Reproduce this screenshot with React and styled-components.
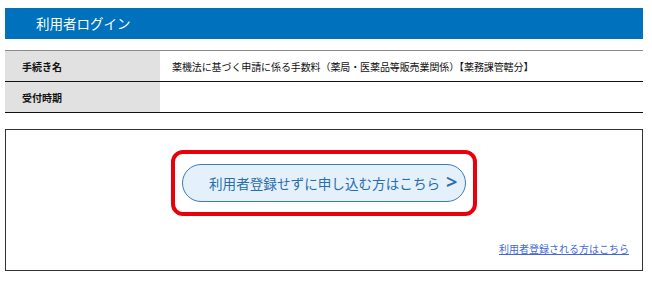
import React from "react";
import styled, { createGlobalStyle } from "styled-components";

const GlobalStyle = createGlobalStyle`
  body {
    margin: 0;
    background: #fff;
    font-family: "Noto Sans CJK JP", "Noto Sans", sans-serif;
  }
`;

const Page = styled.div`
  width: 638px;
  padding: 8px 9px 0 5px;
`;

const TitleBar = styled.h1`
  margin: 0;
  height: 31px;
  line-height: 31px;
  padding-left: 31px;
  background: #0071bc;
  color: #fff;
  font-size: 13.5px;
  font-weight: 400;
`;

const InfoTable = styled.div`
  margin-top: 11px;
  border-top: 1px solid #8a8a8a;
`;

const InfoRow = styled.div`
  display: grid;
  grid-template-columns: 155px 1fr;
  height: 31px;
  border-bottom: 1px solid #111;
  box-sizing: border-box;
`;

const Label = styled.div`
  background: #e1e1e1;
  padding-left: 17px;
  display: flex;
  align-items: center;
  font-size: 10px;
  font-weight: 700;
  color: #111;
`;

const Value = styled.div`
  padding-left: 12px;
  display: flex;
  align-items: center;
  font-size: 10px;
  color: #111;
  letter-spacing: -0.1px;
`;

const EntryBox = styled.div`
  margin-top: 16px;
  height: 142px;
  box-sizing: border-box;
  border: 1px solid #333;
  padding: 20px 13px 0;
`;

const Center = styled.div`
  display: flex;
  justify-content: center;
`;

const Highlight = styled.div`
  border: 4px solid #e8000b;
  border-radius: 12px;
  padding: 10px 7px;
`;

const PillButton = styled.button`
  width: 284px;
  height: 38px;
  box-sizing: border-box;
  border: 1px solid #3b7cb8;
  border-radius: 19px;
  background: #e4f1fb;
  color: #2a6dab;
  font-family: inherit;
  font-size: 13.6px;
  display: flex;
  align-items: center;
  padding: 0 0 0 26px;
  cursor: pointer;
`;

const Arrow = styled.span`
  margin-left: 6px;
  font-size: 20px;
  font-weight: 600;
  font-family: "Noto Sans", sans-serif;
  line-height: 1;
  position: relative;
  top: -1px;
`;

const LinkRow = styled.div`
  margin-top: 18px;
  text-align: right;
`;

const TextLink = styled.a`
  font-size: 10px;
  color: #4468d8;
  text-decoration: underline;
`;

export default function App() {
  return (
    <>
      <GlobalStyle />
      <Page>
        <TitleBar>利用者ログイン</TitleBar>
        <InfoTable>
          <InfoRow>
            <Label>手続き名</Label>
            <Value>
              薬機法に基づく申請に係る手数料（薬局・医薬品等販売業関係）【薬務課管轄分】
            </Value>
          </InfoRow>
          <InfoRow>
            <Label>受付時期</Label>
            <Value />
          </InfoRow>
        </InfoTable>
        <EntryBox>
          <Center>
            <Highlight>
              <PillButton>
                利用者登録せずに申し込む方はこちら
                <Arrow>&gt;</Arrow>
              </PillButton>
            </Highlight>
          </Center>
          <LinkRow>
            <TextLink href="#">利用者登録される方はこちら</TextLink>
          </LinkRow>
        </EntryBox>
      </Page>
    </>
  );
}
